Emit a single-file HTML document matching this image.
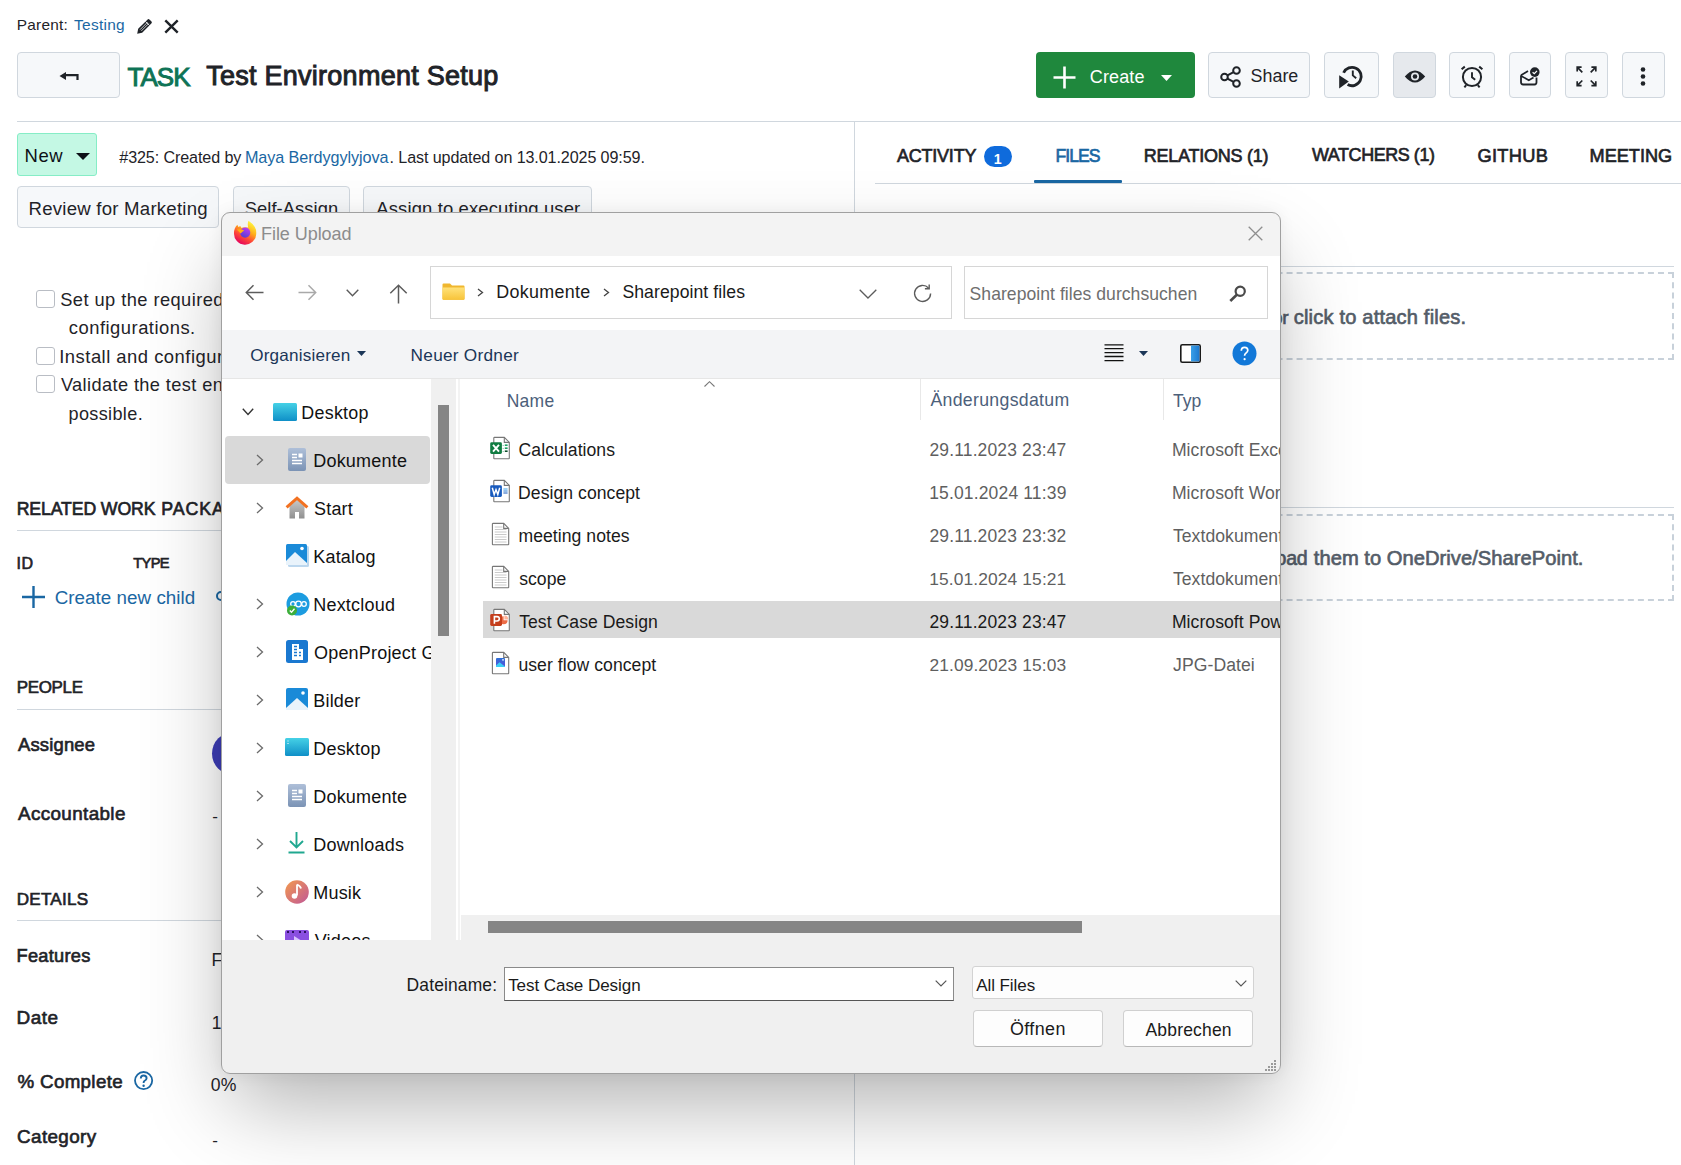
<!DOCTYPE html><html><head><meta charset="utf-8"><style>

html,body{margin:0;padding:0;width:1681px;height:1165px;overflow:hidden;background:#fff;position:relative;font-family:'Liberation Sans',sans-serif;}
.t{position:absolute;white-space:pre;line-height:1;}
.a{position:absolute;box-sizing:border-box;}
svg{position:absolute;overflow:visible;}

</style></head><body>

<span class="t" style="left:16.77px;top:17.24px;font-size:15.42px;letter-spacing:0.244px;font-weight:400;color:#1f2328;">Parent:</span>
<span class="t" style="left:74.09px;top:17.21px;font-size:15.46px;letter-spacing:0.266px;font-weight:400;color:#1a67a3;">Testing</span>
<svg style="left:136px;top:18px" width="17" height="17" viewBox="0 0 17 17"><g transform="translate(1.2,15.8) rotate(-45)"><path d="M0 0 L4.2 -2.8 H17.2 Q18.8 -2.8 18.8 -1.2 V1.2 Q18.8 2.8 17.2 2.8 H4.2 Z" fill="#1f2328"/><path d="M5 -0.9 H15.5 M5 0.9 H15.5" stroke="#fff" stroke-width="0.7"/><path d="M14.6 -2.8 V2.8" stroke="#fff" stroke-width="0.8"/></g></svg>
<svg style="left:163.8px;top:18.8px" width="15" height="15" viewBox="0 0 15 15"><path d="M1.3 1.3 L13.7 13.7 M13.7 1.3 L1.3 13.7" stroke="#1f2328" stroke-width="2.4"/></svg>
<div class="a" style="left:17px;top:52px;width:103px;height:46px;background:#f6f8fa;border:1px solid #d0d7de;border-radius:4px"></div>
<svg style="left:59px;top:71px" width="20" height="10" viewBox="0 0 20 10"><path d="M0.5 5 L7 1 L7 9 Z" fill="#1f2328"/><path d="M6 4.2 H18.5 V9" stroke="#1f2328" stroke-width="2.2" fill="none"/></svg>
<span class="t" style="left:127.48px;top:64.31px;font-size:25.98px;letter-spacing:-0.939px;font-weight:400;color:#0e7356;-webkit-text-stroke:0.95px currentColor">TASK</span>
<span class="t" style="left:206.26px;top:63.42px;font-size:27.03px;letter-spacing:0.249px;font-weight:400;color:#1f2328;-webkit-text-stroke:0.95px currentColor">Test Environment Setup</span>
<div class="a" style="left:1036px;top:52px;width:159px;height:46px;background:#1f883d;border-radius:4px"></div>
<svg style="left:1053px;top:66px" width="23" height="23" viewBox="0 0 23 23"><path d="M11.5 0.5 V22.5 M0.5 11.5 H22.5" stroke="#fff" stroke-width="2.6"/></svg>
<span class="t" style="left:1089.80px;top:68.11px;font-size:18.06px;letter-spacing:0.108px;font-weight:400;color:#ffffff;">Create</span>
<svg style="left:1161px;top:74.5px" width="11" height="6" viewBox="0 0 11 6"><path d="M0 0 H11 L5.5 6 Z" fill="#fff"/></svg>
<div class="a" style="left:1208px;top:52px;width:102px;height:46px;background:#f6f8fa;border:1px solid #d0d7de;border-radius:4px"></div>
<svg style="left:1220px;top:66px" width="21" height="22" viewBox="0 0 21 22"><circle cx="16.5" cy="4.5" r="3.3" fill="none" stroke="#1f2328" stroke-width="2"/><circle cx="4.5" cy="11" r="3.3" fill="none" stroke="#1f2328" stroke-width="2"/><circle cx="16.5" cy="17.5" r="3.3" fill="none" stroke="#1f2328" stroke-width="2"/><path d="M7.4 9.4 L13.6 6.1 M7.4 12.6 L13.6 15.9" stroke="#1f2328" stroke-width="2"/></svg>
<span class="t" style="left:1250.58px;top:68.26px;font-size:17.89px;letter-spacing:0.007px;font-weight:400;color:#1f2328;">Share</span>
<div class="a" style="left:1324px;top:52px;width:55px;height:46px;background:#f6f8fa;border:1px solid #d0d7de;border-radius:4px"></div>
<div class="a" style="left:1393px;top:52px;width:43px;height:46px;background:#e6e9ed;border:1px solid #d0d7de;border-radius:4px"></div>
<div class="a" style="left:1449px;top:52px;width:46px;height:46px;background:#f6f8fa;border:1px solid #d0d7de;border-radius:4px"></div>
<div class="a" style="left:1509px;top:52px;width:42px;height:46px;background:#f6f8fa;border:1px solid #d0d7de;border-radius:4px"></div>
<div class="a" style="left:1565px;top:52px;width:43px;height:46px;background:#f6f8fa;border:1px solid #d0d7de;border-radius:4px"></div>
<div class="a" style="left:1622px;top:52px;width:43px;height:46px;background:#f6f8fa;border:1px solid #d0d7de;border-radius:4px"></div>
<svg style="left:1337px;top:63px" width="28" height="26" viewBox="0 0 28 26"><path d="M6.6 9.8 A9.2 9.2 0 1 1 10.6 21.6" fill="none" stroke="#1f2328" stroke-width="2.8"/><path d="M15.8 7.6 V12.4 L19.2 15.2" fill="none" stroke="#1f2328" stroke-width="1.9"/><path d="M2.2 12.3 L11.8 18.6 L2.2 25.4 Z" fill="#1f2328"/></svg>
<svg style="left:1403.5px;top:68.5px" width="22" height="15" viewBox="0 0 22 15"><path d="M0.8 7.5 Q11 -4.5 21.2 7.5 Q11 19.5 0.8 7.5 Z" fill="#1f2328"/><circle cx="11" cy="7.5" r="4" fill="#e6e9ed"/><circle cx="11" cy="7.5" r="2.3" fill="#1f2328"/></svg>
<svg style="left:1459.8px;top:64.8px" width="24" height="24" viewBox="0 0 24 24"><circle cx="12" cy="12" r="9.1" fill="none" stroke="#1f2328" stroke-width="2"/><path d="M12 7.2 V12.3 L15.2 14.8" fill="none" stroke="#1f2328" stroke-width="1.9"/><path d="M1.6 4.2 L4.8 1.6 M22.4 4.2 L19.2 1.6 M6.2 20.2 L4.4 22.4 M17.8 20.2 L19.6 22.4" stroke="#1f2328" stroke-width="2"/></svg>
<svg style="left:1518px;top:65px" width="22" height="22" viewBox="0 0 22 22"><path d="M3 10.3 L10 6 M3 10.3 V17.3 Q3 19.5 5.2 19.5 H16.5 Q18.5 19.5 18.5 17.3 V12.5" fill="none" stroke="#1f2328" stroke-width="1.8"/><path d="M3.2 11 L10.8 15.2 L15.5 12.6" fill="none" stroke="#1f2328" stroke-width="1.7"/><circle cx="16.8" cy="7.1" r="4.8" fill="#1f2328"/><path d="M14.6 7.2 L16.3 8.7 L19 5.8" fill="none" stroke="#fff" stroke-width="1.2"/></svg>
<svg style="left:1576px;top:66px" width="21" height="21" viewBox="0 0 21 21"><g fill="none" stroke="#1f2328" stroke-width="1.7"><path d="M1.2 5.6 V1.2 H5.6 M1.2 1.2 L6.3 6.3"/><path d="M15.4 1.2 H19.8 V5.6 M19.8 1.2 L14.7 6.3"/><path d="M1.2 15.2 V19.6 H5.6 M1.2 19.6 L6.3 14.5"/><path d="M19.8 15.2 V19.6 H15.4 M19.8 19.6 L14.7 14.5"/></g></svg>
<svg style="left:1639px;top:67px" width="8" height="19" viewBox="0 0 8 19"><circle cx="4" cy="2.5" r="2.3" fill="#1f2328"/><circle cx="4" cy="9.5" r="2.3" fill="#1f2328"/><circle cx="4" cy="16.5" r="2.3" fill="#1f2328"/></svg>
<div class="a" style="left:17px;top:121px;width:1664px;height:1px;background:#d0d7de"></div>
<div class="a" style="left:854px;top:122px;width:1px;height:1043px;background:#d0d7de"></div>
<div class="a" style="left:17px;top:133px;width:80px;height:43px;background:#c4f8e4;border:1px solid #86edc6;border-radius:3px"></div>
<span class="t" style="left:24.52px;top:147.18px;font-size:18.45px;letter-spacing:0.557px;font-weight:400;color:#0d1117;">New</span>
<svg style="left:75.5px;top:153px" width="14" height="7" viewBox="0 0 14 7"><path d="M0 0 H14 L7 7 Z" fill="#0d1117"/></svg>
<span class="t" style="left:119.30px;top:149.14px;font-size:16.13px;letter-spacing:-0.105px;font-weight:400;color:#1f2328;">#325: Created by</span>
<span class="t" style="left:244.90px;top:149.08px;font-size:16.21px;letter-spacing:-0.070px;font-weight:400;color:#1a67a3;">Maya Berdygylyjova</span>
<span class="t" style="left:389.55px;top:149.16px;font-size:16.12px;letter-spacing:-0.104px;font-weight:400;color:#1f2328;">. Last updated on 13.01.2025 09:59.</span>
<div class="a" style="left:17px;top:186px;width:202px;height:42px;background:#f6f8fa;border:1px solid #d0d7de;border-radius:4px"></div>
<div class="a" style="left:233px;top:186px;width:117px;height:42px;background:#f6f8fa;border:1px solid #d0d7de;border-radius:4px"></div>
<div class="a" style="left:363px;top:186px;width:229px;height:42px;background:#f6f8fa;border:1px solid #d0d7de;border-radius:4px"></div>
<span class="t" style="left:28.51px;top:200.04px;font-size:18.62px;letter-spacing:0.228px;font-weight:400;color:#1f2328;">Review for Marketing</span>
<span class="t" style="left:244.67px;top:200.28px;font-size:18.34px;letter-spacing:0.091px;font-weight:400;color:#1f2328;">Self-Assign</span>
<span class="t" style="left:376.30px;top:200.19px;font-size:18.44px;letter-spacing:0.133px;font-weight:400;color:#1f2328;">Assign to executing user</span>
<div class="a" style="left:36px;top:290px;width:19px;height:18px;border:1.5px solid #b9bdc4;border-radius:3px;background:#fff"></div>
<div class="a" style="left:36px;top:347px;width:19px;height:18px;border:1.5px solid #b9bdc4;border-radius:3px;background:#fff"></div>
<div class="a" style="left:36px;top:375px;width:19px;height:18px;border:1.5px solid #b9bdc4;border-radius:3px;background:#fff"></div>
<span class="t" style="left:60.17px;top:290.94px;font-size:18.27px;letter-spacing:0.443px;font-weight:400;color:#1f2328;">Set up the required</span>
<span class="t" style="left:68.86px;top:318.93px;font-size:18.39px;letter-spacing:0.488px;font-weight:400;color:#1f2328;">configurations.</span>
<span class="t" style="left:59.24px;top:347.69px;font-size:18.43px;letter-spacing:0.487px;font-weight:400;color:#1f2328;">Install and configur</span>
<span class="t" style="left:60.90px;top:375.98px;font-size:18.21px;letter-spacing:0.397px;font-weight:400;color:#1f2328;">Validate the test en</span>
<span class="t" style="left:68.52px;top:404.90px;font-size:18.07px;letter-spacing:0.357px;font-weight:400;color:#1f2328;">possible.</span>
<span class="t" style="left:16.68px;top:500.62px;font-size:17.70px;letter-spacing:-0.125px;font-weight:400;color:#1f2328;-webkit-text-stroke:0.65px currentColor">RELATED WORK</span>
<span class="t" style="left:161.28px;top:500.53px;font-size:17.80px;letter-spacing:0.900px;font-weight:400;color:#1f2328;-webkit-text-stroke:0.65px currentColor">PACKAGES</span>
<div class="a" style="left:17px;top:530px;width:838px;height:1px;background:#d0d7de"></div>
<span class="t" style="left:16.56px;top:555.23px;font-size:16.04px;letter-spacing:0.584px;font-weight:400;color:#1f2328;-webkit-text-stroke:0.65px currentColor">ID</span>
<span class="t" style="left:133.21px;top:556.42px;font-size:14.63px;letter-spacing:-0.625px;font-weight:400;color:#1f2328;-webkit-text-stroke:0.65px currentColor">TYPE</span>
<svg style="left:22px;top:586px" width="23" height="22" viewBox="0 0 23 22"><path d="M11.5 0 V22 M0 11 H23" stroke="#1a67a3" stroke-width="2.4"/></svg>
<span class="t" style="left:54.66px;top:589.28px;font-size:18.80px;letter-spacing:0.043px;font-weight:400;color:#1a67a3;">Create new child</span>
<svg style="left:214px;top:590px" width="12" height="12" viewBox="0 0 12 12"><circle cx="7" cy="6" r="4" fill="none" stroke="#1a67a3" stroke-width="2"/></svg>
<span class="t" style="left:16.64px;top:680.05px;font-size:16.95px;letter-spacing:-0.288px;font-weight:400;color:#1f2328;-webkit-text-stroke:0.65px currentColor">PEOPLE</span>
<div class="a" style="left:17px;top:709px;width:838px;height:1px;background:#d0d7de"></div>
<span class="t" style="left:18.00px;top:736.29px;font-size:18.45px;letter-spacing:0.169px;font-weight:400;color:#1f2328;-webkit-text-stroke:0.65px currentColor">Assignee</span>
<div class="a" style="left:212.2px;top:732px;width:43px;height:43px;background:#3d3db8;border-radius:50%"></div>
<span class="t" style="left:18.00px;top:804.65px;font-size:18.84px;letter-spacing:0.376px;font-weight:400;color:#1f2328;-webkit-text-stroke:0.65px currentColor">Accountable</span>
<span class="t" style="left:212.32px;top:807.71px;font-size:17.00px;letter-spacing:0.000px;font-weight:400;color:#1f2328;">-</span>
<span class="t" style="left:16.63px;top:890.50px;font-size:17.13px;letter-spacing:0.246px;font-weight:400;color:#1f2328;-webkit-text-stroke:0.65px currentColor">DETAILS</span>
<div class="a" style="left:17px;top:920px;width:838px;height:1px;background:#d0d7de"></div>
<span class="t" style="left:16.54px;top:947.07px;font-size:18.23px;letter-spacing:0.268px;font-weight:400;color:#1f2328;-webkit-text-stroke:0.65px currentColor">Features</span>
<span class="t" style="left:211.60px;top:951.69px;font-size:17.50px;letter-spacing:0.000px;font-weight:400;color:#1f2328;">F</span>
<span class="t" style="left:16.48px;top:1009.34px;font-size:18.97px;letter-spacing:0.543px;font-weight:400;color:#1f2328;-webkit-text-stroke:0.65px currentColor">Date</span>
<span class="t" style="left:211.78px;top:1014.69px;font-size:17.50px;letter-spacing:0.000px;font-weight:400;color:#1f2328;">1</span>
<span class="t" style="left:17.44px;top:1072.53px;font-size:18.74px;letter-spacing:0.350px;font-weight:400;color:#1f2328;-webkit-text-stroke:0.65px currentColor">% Complete</span>
<svg style="left:133.5px;top:1071px" width="20" height="20" viewBox="0 0 20 20"><circle cx="9.6" cy="9.6" r="8.6" fill="none" stroke="#1a67a3" stroke-width="1.8"/><path d="M6.8 7.5 Q6.8 4.5 9.6 4.5 Q12.6 4.5 12.6 7.2 Q12.6 9 10.4 10 Q9.6 10.5 9.6 12" fill="none" stroke="#1a67a3" stroke-width="1.9"/><circle cx="9.6" cy="14.8" r="1.2" fill="#1a67a3"/></svg>
<span class="t" style="left:210.87px;top:1077.10px;font-size:17.60px;letter-spacing:0.200px;font-weight:400;color:#1f2328;">0%</span>
<span class="t" style="left:17.06px;top:1128.06px;font-size:18.83px;letter-spacing:0.388px;font-weight:400;color:#1f2328;-webkit-text-stroke:0.65px currentColor">Category</span>
<span class="t" style="left:212.32px;top:1131.71px;font-size:17.00px;letter-spacing:0.000px;font-weight:400;color:#1f2328;">-</span>
<span class="t" style="left:897.00px;top:147.23px;font-size:18.03px;letter-spacing:-0.236px;font-weight:400;color:#1f2328;-webkit-text-stroke:0.65px currentColor">ACTIVITY</span>
<div class="a" style="left:984px;top:146px;width:28px;height:21px;background:#0f6bdc;border-radius:11px"></div>
<span class="t" style="left:993.65px;top:151.78px;font-size:14.20px;letter-spacing:0.000px;font-weight:700;color:#fff;">1</span>
<span class="t" style="left:1055.39px;top:147.54px;font-size:17.67px;letter-spacing:-0.962px;font-weight:400;color:#1a67a3;-webkit-text-stroke:0.65px currentColor">FILES</span>
<span class="t" style="left:1143.86px;top:147.26px;font-size:18.01px;letter-spacing:-0.261px;font-weight:400;color:#1f2328;-webkit-text-stroke:0.65px currentColor">RELATIONS (1)</span>
<span class="t" style="left:1312.00px;top:147.31px;font-size:17.94px;letter-spacing:-0.419px;font-weight:400;color:#1f2328;-webkit-text-stroke:0.65px currentColor">WATCHERS (1)</span>
<span class="t" style="left:1477.59px;top:147.03px;font-size:18.27px;letter-spacing:0.250px;font-weight:400;color:#1f2328;-webkit-text-stroke:0.65px currentColor">GITHUB</span>
<span class="t" style="left:1589.55px;top:147.13px;font-size:18.15px;letter-spacing:-0.004px;font-weight:400;color:#1f2328;-webkit-text-stroke:0.65px currentColor">MEETING</span>
<div class="a" style="left:875px;top:183px;width:806px;height:1px;background:#d0d7de"></div>
<div class="a" style="left:1034px;top:180px;width:88px;height:3px;background:#1a67a3;border-radius:1px"></div>
<div class="a" style="left:875px;top:266px;width:799px;height:1px;background:#d0d7de"></div>
<div class="a" style="left:875px;top:272px;width:799px;height:88px;border:2px dashed #c8d1da"></div>
<span class="t" style="left:1293.70px;top:306.92px;font-size:20.06px;letter-spacing:0.198px;font-weight:400;color:#545d68;-webkit-text-stroke:0.65px currentColor">click to attach files.</span>
<span class="t" style="left:1145.87px;top:307.75px;font-size:19.08px;letter-spacing:-0.204px;font-weight:400;color:#545d68;-webkit-text-stroke:0.65px currentColor">Drop files here or</span>
<div class="a" style="left:875px;top:507px;width:799px;height:1px;background:#d0d7de"></div>
<div class="a" style="left:875px;top:514px;width:799px;height:87px;border:2px dashed #c8d1da"></div>
<span class="t" style="left:1313.80px;top:548.13px;font-size:20.16px;letter-spacing:0.026px;font-weight:400;color:#545d68;-webkit-text-stroke:0.65px currentColor">them to OneDrive/SharePoint.</span>
<span class="t" style="left:1101.77px;top:548.65px;font-size:19.55px;letter-spacing:-0.291px;font-weight:400;color:#545d68;-webkit-text-stroke:0.65px currentColor">Drop files here to upload</span>

<div class="a" style="left:221px;top:212px;width:1060px;height:862px;border-radius:9px;background:#f0f0f0;box-shadow:0 40px 80px -10px rgba(0,0,0,0.30),0 0 16px rgba(0,0,0,0.06)"></div><div class="a" style="left:221px;top:212px;width:1060px;height:862px;border-radius:9px;overflow:hidden">
<div class="a" style="left:0.00px;top:0.00px;width:1061px;height:44px;background:#f3f3f3"></div>
<svg style="left:9.00px;top:4.00px" width="32" height="32" viewBox="0 0 32 32"><defs><linearGradient id="ffb" x1="0.8" y1="0.1" x2="0.3" y2="1"><stop offset="0" stop-color="#fff03a"/><stop offset="0.35" stop-color="#ffae1a"/><stop offset="0.65" stop-color="#ff4a36"/><stop offset="1" stop-color="#e3005f"/></linearGradient>
      <linearGradient id="ffp" x1="0.7" y1="0" x2="0.2" y2="1"><stop offset="0" stop-color="#c23cf0"/><stop offset="1" stop-color="#4a3fd0"/></linearGradient></defs>
      <path d="M7.3 8.8 L8.4 11 L10.3 10 L11.2 11.8 Q15 10.6 18.2 11.6 Q17.2 8 18.5 4.8 Q22.5 7.5 24.8 11 Q26.6 14 26.2 18.2 A11.1 11.1 0 0 1 4 17 Q4 12 7.3 8.8 Z" fill="url(#ffb)"/>
      <circle cx="15.2" cy="16.6" r="5.1" fill="url(#ffp)"/>
      <path d="M6.8 13.6 Q10.5 12.6 14.2 14.4 Q12 15.6 10.6 17.6 Q8.6 15.2 6.8 13.6 Z" fill="#ffb00f"/></svg>
<span class="t" style="left:40.06px;top:13.14px;font-size:18.03px;letter-spacing:-0.063px;font-weight:400;color:#8c8c8c;">File Upload</span>
<svg style="left:1027.00px;top:14.00px" width="15" height="15" viewBox="0 0 15 15"><path d="M0.7 0.7 L14.3 14.3 M14.3 0.7 L0.7 14.3" stroke="#8e8e8e" stroke-width="1.3"/></svg>
<div class="a" style="left:0.00px;top:44.00px;width:1061px;height:74px;background:#ffffff"></div>
<svg style="left:24.00px;top:72.00px" width="19" height="17" viewBox="0 0 19 17"><path d="M18.5 8.5 H1.5 M8.5 1.3 L1.3 8.5 L8.5 15.7" fill="none" stroke="#5c5c5c" stroke-width="1.5"/></svg>
<svg style="left:77.00px;top:72.00px" width="19" height="17" viewBox="0 0 19 17"><path d="M0.5 8.5 H17.5 M10.5 1.3 L17.7 8.5 L10.5 15.7" fill="none" stroke="#a9a9a9" stroke-width="1.5"/></svg>
<svg style="left:125.00px;top:76.50px" width="13" height="8" viewBox="0 0 13 8"><path d="M0.7 0.7 L6.5 6.7 L12.3 0.7" fill="none" stroke="#5c5c5c" stroke-width="1.4"/></svg>
<svg style="left:168.00px;top:72.00px" width="19" height="20" viewBox="0 0 19 20"><path d="M9.5 19.5 V1.5 M1.3 9.3 L9.5 1.2 L17.7 9.3" fill="none" stroke="#5c5c5c" stroke-width="1.5"/></svg>
<div class="a" style="left:209.00px;top:54.00px;width:522px;height:53px;border:1px solid #d6d6d6;background:#fff"></div>
<svg style="left:221.00px;top:71.00px" width="23" height="17" viewBox="0 0 23 17"><defs><linearGradient id="fold" x1="0" y1="0" x2="0" y2="1"><stop offset="0" stop-color="#ffe27a"/><stop offset="1" stop-color="#f7c339"/></linearGradient></defs>
      <path d="M0.5 1.5 Q0.5 0.5 1.5 0.5 H8 L10 2.5 H21.5 Q22.5 2.5 22.5 3.5 V15.8 Q22.5 16.8 21.5 16.8 H1.5 Q0.5 16.8 0.5 15.8 Z" fill="#f0b72f"/>
      <path d="M0.5 4.5 H22.5 V15.8 Q22.5 16.8 21.5 16.8 H1.5 Q0.5 16.8 0.5 15.8 Z" fill="url(#fold)"/></svg>
<svg style="left:256.00px;top:76.00px" width="7" height="9" viewBox="0 0 7 9"><path d="M1 1 L5.5 4.5 L1 8" fill="none" stroke="#444" stroke-width="1.3"/></svg>
<span class="t" style="left:275.27px;top:72.14px;font-size:17.91px;letter-spacing:0.284px;font-weight:400;color:#1a1a1a;">Dokumente</span>
<svg style="left:382.00px;top:76.00px" width="7" height="9" viewBox="0 0 7 9"><path d="M1 1 L5.5 4.5 L1 8" fill="none" stroke="#444" stroke-width="1.3"/></svg>
<span class="t" style="left:401.39px;top:72.37px;font-size:17.63px;letter-spacing:0.079px;font-weight:400;color:#1a1a1a;">Sharepoint files</span>
<svg style="left:638.00px;top:76.50px" width="18" height="10" viewBox="0 0 18 10"><path d="M0.7 0.7 L9 9 L17.3 0.7" fill="none" stroke="#5c5c5c" stroke-width="1.3"/></svg>
<svg style="left:692.00px;top:71.50px" width="20" height="20" viewBox="0 0 20 20"><path d="M17.6 9.5 A8 8 0 1 1 15.5 4" fill="none" stroke="#5c5c5c" stroke-width="1.4"/><path d="M16.2 0.5 V4.8 H11.9" fill="none" stroke="#5c5c5c" stroke-width="1.4"/></svg>
<div class="a" style="left:743.00px;top:54.00px;width:304px;height:53px;border:1px solid #d6d6d6;background:#fff"></div>
<span class="t" style="left:748.60px;top:73.93px;font-size:17.56px;letter-spacing:0.050px;font-weight:400;color:#6e6e6e;">Sharepoint files durchsuchen</span>
<svg style="left:1008.00px;top:73.00px" width="18" height="17" viewBox="0 0 18 17"><circle cx="11.2" cy="6.3" r="4.6" fill="none" stroke="#4a4a4a" stroke-width="2.2"/><path d="M7.8 9.8 L1.3 16" stroke="#4a4a4a" stroke-width="2.6"/></svg>
<div class="a" style="left:0.00px;top:118.00px;width:1061px;height:49px;background:#f3f4f6;border-bottom:1px solid #e6e6e6"></div>
<span class="t" style="left:29.21px;top:134.80px;font-size:17.13px;letter-spacing:0.189px;font-weight:400;color:#1b3658;">Organisieren</span>
<svg style="left:136.00px;top:139.00px" width="9" height="5" viewBox="0 0 9 5"><path d="M0 0 H9 L4.5 5 Z" fill="#1b3658"/></svg>
<span class="t" style="left:189.62px;top:134.71px;font-size:17.23px;letter-spacing:0.259px;font-weight:400;color:#1b3658;">Neuer Ordner</span>
<svg style="left:883.00px;top:132.00px" width="20" height="18" viewBox="0 0 20 18"><path d="M0.5 0.8 H19.5 M0.5 4.7 H19.5 M0.5 8.6 H19.5 M0.5 12.5 H19.5 M0.5 16.6 H19.5" stroke="#111" stroke-width="1.3"/></svg>
<svg style="left:918.00px;top:138.50px" width="9" height="5" viewBox="0 0 9 5"><path d="M0 0 H9 L4.5 5 Z" fill="#1b3658"/></svg>
<svg style="left:959.00px;top:131.50px" width="21" height="19" viewBox="0 0 21 19"><defs><linearGradient id="pv" x1="0" y1="0" x2="1" y2="0"><stop offset="0" stop-color="#3aa0e8"/><stop offset="1" stop-color="#1d79d0"/></linearGradient></defs><rect x="0.8" y="0.8" width="19.4" height="17.4" rx="1.5" fill="#fff" stroke="#1a1a1a" stroke-width="1.6"/><rect x="11" y="1.6" width="8.4" height="15.8" fill="url(#pv)"/></svg>
<svg style="left:1011.00px;top:129.00px" width="25" height="25" viewBox="0 0 25 25"><circle cx="12.5" cy="12.5" r="12" fill="#1278d8"/><path d="M9.3 9.8 Q9.3 6.3 12.6 6.3 Q15.8 6.3 15.8 9.3 Q15.8 11.2 13.6 12.4 Q12.6 13 12.6 14.8" fill="none" stroke="#fff" stroke-width="1.7"/><circle cx="12.6" cy="18.2" r="1.1" fill="#fff"/></svg>
<div class="a" style="left:210.00px;top:167.00px;width:25px;height:561px;background:#f0f0f0"></div>
<div class="a" style="left:217.00px;top:193.00px;width:11px;height:231px;background:#858585"></div>
<div class="a" style="left:235.00px;top:167.00px;width:5px;height:561px;background:#fff"></div>
<div class="a" style="left:237.00px;top:167.00px;width:1.5px;height:561px;background:#f3f3f3"></div>
<div class="a" style="left:240.00px;top:703.00px;width:821px;height:25px;background:#f0f0f0"></div>
<div class="a" style="left:267.00px;top:709.00px;width:594px;height:12px;background:#858585"></div>
<div class="a" style="left:0.00px;top:728.00px;width:1061px;height:134px;background:#f0f0f0"></div>
<span class="t" style="left:185.61px;top:764.74px;font-size:17.44px;letter-spacing:0.141px;font-weight:400;color:#1a1a1a;">Dateiname:</span>
<div class="a" style="left:283.00px;top:755.00px;width:450px;height:34px;background:#fff;border:1px solid #8a8a8a;border-bottom-color:#555"></div>
<span class="t" style="left:287.16px;top:765.07px;font-size:17.05px;letter-spacing:-0.067px;font-weight:400;color:#1a1a1a;">Test Case Design</span>
<svg style="left:713.50px;top:767.50px" width="12" height="7" viewBox="0 0 12 7"><path d="M0.7 0.7 L6 6 L11.3 0.7" fill="none" stroke="#555" stroke-width="1.2"/></svg>
<div class="a" style="left:751.00px;top:754.00px;width:282px;height:33px;background:#fdfdfd;border:1px solid #d3d3d3;border-radius:3px"></div>
<span class="t" style="left:755.20px;top:765.09px;font-size:17.02px;letter-spacing:-0.070px;font-weight:400;color:#1a1a1a;">All Files</span>
<svg style="left:1013.50px;top:767.50px" width="12" height="7" viewBox="0 0 12 7"><path d="M0.7 0.7 L6 6 L11.3 0.7" fill="none" stroke="#555" stroke-width="1.2"/></svg>
<div class="a" style="left:752.00px;top:797.50px;width:130px;height:37px;background:#fdfdfd;border:1px solid #d0d0d0;border-bottom-color:#b8b8b8;border-radius:4px"></div>
<span class="t" style="left:788.88px;top:809.23px;font-size:17.92px;letter-spacing:0.429px;font-weight:400;color:#1a1a1a;">Öffnen</span>
<div class="a" style="left:902.00px;top:797.50px;width:130px;height:37px;background:#fdfdfd;border:1px solid #d0d0d0;border-bottom-color:#b8b8b8;border-radius:4px"></div>
<span class="t" style="left:924.50px;top:809.60px;font-size:17.49px;letter-spacing:0.186px;font-weight:400;color:#1a1a1a;">Abbrechen</span>
<svg style="left:1044.00px;top:847.00px" width="12" height="12" viewBox="0 0 12 12"><g fill="#9a9a9a"><rect x="9" y="1" width="2" height="2"/><rect x="6" y="4" width="2" height="2"/><rect x="9" y="4" width="2" height="2"/><rect x="3" y="7" width="2" height="2"/><rect x="6" y="7" width="2" height="2"/><rect x="9" y="7" width="2" height="2"/><rect x="0" y="10" width="2" height="2"/><rect x="3" y="10" width="2" height="2"/><rect x="6" y="10" width="2" height="2"/><rect x="9" y="10" width="2" height="2"/></g></svg>

<div class="a" style="left:1px;top:167px;width:209px;height:561px;overflow:hidden;background:#fff">
<svg style="left:20.00px;top:28.50px" width="12" height="8" viewBox="0 0 12 8"><path d="M0.8 0.8 L6 6.5 L11.2 0.8" fill="none" stroke="#333" stroke-width="1.4"/></svg>
<svg style="left:51.00px;top:24.00px" width="24" height="18" viewBox="0 0 24 18"><defs><linearGradient id="dsk" x1="0" y1="0" x2="0" y2="1"><stop offset="0" stop-color="#45d1e6"/><stop offset="1" stop-color="#0f8fc7"/></linearGradient></defs><rect x="0" y="0" width="24" height="18" rx="1.5" fill="url(#dsk)"/></svg>
<span class="t" style="left:79.37px;top:25.95px;font-size:17.89px;letter-spacing:0.257px;font-weight:400;color:#111;">Desktop</span>
<div class="a" style="left:3.00px;top:57.00px;width:205px;height:48px;background:#d9d9d9;border-radius:4px"></div>
<svg style="left:34.00px;top:75.00px" width="8" height="12" viewBox="0 0 8 12"><path d="M1 1 L6.5 6 L1 11" fill="none" stroke="#6b6b6b" stroke-width="1.3"/></svg>
<span class="t" style="left:91.26px;top:72.86px;font-size:18.00px;letter-spacing:0.200px;font-weight:400;color:#111;">Dokumente</span>
<svg style="left:66.00px;top:69.00px" width="19" height="24" viewBox="0 0 19 24"><defs><linearGradient id="doc0" x1="0" y1="0" x2="0" y2="1"><stop offset="0" stop-color="#aebfd8"/><stop offset="1" stop-color="#7b93b5"/></linearGradient></defs><rect x="0" y="0" width="18" height="23" rx="2" fill="url(#doc0)"/><path d="M4 6.5 H9 M4 9.5 H9 M4 12.5 H14 M4 15.5 H14" stroke="#fff" stroke-width="1.4"/><rect x="10.5" y="5.5" width="4" height="4" fill="#fff"/></svg>
<svg style="left:34.00px;top:123.00px" width="8" height="12" viewBox="0 0 8 12"><path d="M1 1 L6.5 6 L1 11" fill="none" stroke="#6b6b6b" stroke-width="1.3"/></svg>
<span class="t" style="left:91.98px;top:120.86px;font-size:18.00px;letter-spacing:0.200px;font-weight:400;color:#111;">Start</span>
<svg style="left:63.00px;top:116.00px" width="24" height="24" viewBox="0 0 24 24"><defs><linearGradient id="hs" x1="0" y1="0" x2="0" y2="1"><stop offset="0" stop-color="#c9c9c9"/><stop offset="1" stop-color="#8f8f8f"/></linearGradient></defs><path d="M4.5 11 V23.6 H10 V17 H14 V23.6 H19.5 V11 L12 4.5 Z" fill="url(#hs)"/><path d="M1.6 12.4 L12 3.2 L22.4 12.4" fill="none" stroke="#f27121" stroke-width="3"/></svg>
<span class="t" style="left:91.26px;top:168.86px;font-size:18.00px;letter-spacing:0.200px;font-weight:400;color:#111;">Katalog</span>
<svg style="left:63.50px;top:165.00px" width="24" height="24" viewBox="0 0 24 24"><rect x="2" y="2" width="21" height="21" rx="1.5" fill="#bcd7ee"/><rect x="0" y="0" width="21" height="21" rx="1.5" fill="#1a8ad8"/><path d="M0 17 L9 8 L21 19 V21 H0 Z" fill="#e9f3fb"/><circle cx="16" cy="4.5" r="1.8" fill="#fff"/></svg>
<svg style="left:34.00px;top:219.00px" width="8" height="12" viewBox="0 0 8 12"><path d="M1 1 L6.5 6 L1 11" fill="none" stroke="#6b6b6b" stroke-width="1.3"/></svg>
<span class="t" style="left:91.26px;top:216.86px;font-size:18.00px;letter-spacing:0.200px;font-weight:400;color:#111;">Nextcloud</span>
<svg style="left:63.50px;top:213.00px" width="24" height="24" viewBox="0 0 24 24"><circle cx="12" cy="12" r="11.5" fill="#1c9ce0"/><circle cx="7" cy="12" r="2.3" fill="none" stroke="#fff" stroke-width="1.3"/><circle cx="12.5" cy="12" r="2.8" fill="none" stroke="#fff" stroke-width="1.3"/><circle cx="18" cy="12" r="2.3" fill="none" stroke="#fff" stroke-width="1.3"/><circle cx="6" cy="18.5" r="5" fill="#3cae3a"/><path d="M3.8 18.5 L5.5 20.2 L8.5 16.8" fill="none" stroke="#fff" stroke-width="1.3"/></svg>
<svg style="left:34.00px;top:267.00px" width="8" height="12" viewBox="0 0 8 12"><path d="M1 1 L6.5 6 L1 11" fill="none" stroke="#6b6b6b" stroke-width="1.3"/></svg>
<span class="t" style="left:91.98px;top:264.86px;font-size:18.00px;letter-spacing:0.200px;font-weight:400;color:#111;">OpenProject GmbH</span>
<svg style="left:64.30px;top:261.00px" width="22" height="22" viewBox="0 0 22 22"><rect x="0" y="0" width="22" height="23" rx="2.5" fill="#1a78d0"/><path d="M6 20 V4 H13 V9 H17 V20 Z" fill="#fff"/><path d="M8 6.5 H11 M8 9.5 H11 M8 12.5 H11 M13 12.5 H15 M8 15.5 H11 M13 15.5 H15" stroke="#1a78d0" stroke-width="1.4"/></svg>
<svg style="left:34.00px;top:315.00px" width="8" height="12" viewBox="0 0 8 12"><path d="M1 1 L6.5 6 L1 11" fill="none" stroke="#6b6b6b" stroke-width="1.3"/></svg>
<span class="t" style="left:91.26px;top:312.86px;font-size:18.00px;letter-spacing:0.200px;font-weight:400;color:#111;">Bilder</span>
<svg style="left:64.30px;top:309.00px" width="22" height="22" viewBox="0 0 22 22"><rect x="0" y="0" width="22" height="22" rx="2" fill="#1a8ad8"/><path d="M0 20 L11 10 L22 20 V22 H0 Z" fill="#e9f3fb"/><circle cx="17" cy="5" r="1.8" fill="#fff"/></svg>
<svg style="left:34.00px;top:363.00px" width="8" height="12" viewBox="0 0 8 12"><path d="M1 1 L6.5 6 L1 11" fill="none" stroke="#6b6b6b" stroke-width="1.3"/></svg>
<span class="t" style="left:91.26px;top:360.86px;font-size:18.00px;letter-spacing:0.200px;font-weight:400;color:#111;">Desktop</span>
<svg style="left:63.00px;top:359.00px" width="24" height="18" viewBox="0 0 24 18"><defs><linearGradient id="dsk2" x1="0" y1="0" x2="0" y2="1"><stop offset="0" stop-color="#45d1e6"/><stop offset="1" stop-color="#0f8fc7"/></linearGradient></defs><rect x="0" y="0" width="24" height="18" rx="1.5" fill="url(#dsk2)"/><path d="M3 2.5 V3.5 M3 5 V6" stroke="#fff" stroke-width="1"/></svg>
<svg style="left:34.00px;top:411.00px" width="8" height="12" viewBox="0 0 8 12"><path d="M1 1 L6.5 6 L1 11" fill="none" stroke="#6b6b6b" stroke-width="1.3"/></svg>
<span class="t" style="left:91.26px;top:408.86px;font-size:18.00px;letter-spacing:0.200px;font-weight:400;color:#111;">Dokumente</span>
<svg style="left:66.00px;top:405.00px" width="19" height="24" viewBox="0 0 19 24"><defs><linearGradient id="doc7" x1="0" y1="0" x2="0" y2="1"><stop offset="0" stop-color="#aebfd8"/><stop offset="1" stop-color="#7b93b5"/></linearGradient></defs><rect x="0" y="0" width="18" height="23" rx="2" fill="url(#doc7)"/><path d="M4 6.5 H9 M4 9.5 H9 M4 12.5 H14 M4 15.5 H14" stroke="#fff" stroke-width="1.4"/><rect x="10.5" y="5.5" width="4" height="4" fill="#fff"/></svg>
<svg style="left:34.00px;top:459.00px" width="8" height="12" viewBox="0 0 8 12"><path d="M1 1 L6.5 6 L1 11" fill="none" stroke="#6b6b6b" stroke-width="1.3"/></svg>
<span class="t" style="left:91.26px;top:456.86px;font-size:18.00px;letter-spacing:0.200px;font-weight:400;color:#111;">Downloads</span>
<svg style="left:66.00px;top:452.00px" width="17" height="23" viewBox="0 0 17 23"><path d="M8.5 1 V16.5 M2 10 L8.5 16.5 L15 10 M0.5 21.5 H16.5" fill="none" stroke="#20a890" stroke-width="1.9"/></svg>
<svg style="left:34.00px;top:507.00px" width="8" height="12" viewBox="0 0 8 12"><path d="M1 1 L6.5 6 L1 11" fill="none" stroke="#6b6b6b" stroke-width="1.3"/></svg>
<span class="t" style="left:91.26px;top:504.86px;font-size:18.00px;letter-spacing:0.200px;font-weight:400;color:#111;">Musik</span>
<svg style="left:63.00px;top:501.00px" width="24" height="24" viewBox="0 0 24 24"><defs><linearGradient id="mus" x1="0" y1="0" x2="1" y2="1"><stop offset="0" stop-color="#f39a4d"/><stop offset="1" stop-color="#c05898"/></linearGradient></defs><circle cx="12" cy="12" r="11.8" fill="url(#mus)"/><path d="M12 4.5 V15.5 M12 4.5 Q15.5 6 16 8.5" fill="none" stroke="#fff" stroke-width="1.8"/><circle cx="9.5" cy="16" r="2.8" fill="#fff"/></svg>
<svg style="left:34.00px;top:555.00px" width="8" height="12" viewBox="0 0 8 12"><path d="M1 1 L6.5 6 L1 11" fill="none" stroke="#6b6b6b" stroke-width="1.3"/></svg>
<span class="t" style="left:92.70px;top:552.86px;font-size:18.00px;letter-spacing:0.200px;font-weight:400;color:#111;">Videos</span>
<svg style="left:63.00px;top:549.00px" width="24" height="22" viewBox="0 0 24 22"><rect x="0" y="2" width="24" height="20" rx="2" fill="#8a4fe0"/><path d="M2 4 H4 M7 4 H9 M14 4 H16 M19 4 H21" stroke="#2d1060" stroke-width="2"/><path d="M9 8 L17 13 L9 18 Z" fill="#d9c4ff"/></svg>
</div>
<div class="a" style="left:240px;top:167px;width:820px;height:536px;overflow:hidden;background:#fff">
<svg style="left:243.00px;top:1.50px" width="11" height="6" viewBox="0 0 11 6"><path d="M0.5 5.5 L5.5 0.7 L10.5 5.5" fill="none" stroke="#777" stroke-width="1.1"/></svg>
<span class="t" style="left:45.70px;top:13.60px;font-size:17.49px;letter-spacing:0.262px;font-weight:400;color:#4c607a;">Name</span>
<div class="a" style="left:459.00px;top:0.00px;width:1px;height:41px;background:#e8e8e8"></div>
<span class="t" style="left:469.40px;top:13.40px;font-size:17.72px;letter-spacing:0.317px;font-weight:400;color:#4c607a;">Änderungsdatum</span>
<div class="a" style="left:702.00px;top:0.00px;width:1px;height:41px;background:#e8e8e8"></div>
<span class="t" style="left:711.95px;top:13.59px;font-size:17.50px;letter-spacing:0.000px;font-weight:400;color:#4c607a;">Typ</span>
<div class="a" style="left:22.00px;top:222.00px;width:820px;height:37px;background:#d9d9d9"></div>
<span class="t" style="left:57.62px;top:62.50px;font-size:17.60px;letter-spacing:0.050px;font-weight:400;color:#1a1a1a;">Calculations</span>
<span class="t" style="left:468.53px;top:62.61px;font-size:17.47px;letter-spacing:0.146px;font-weight:400;color:#5f5f5f;">29.11.2023 23:47</span>
<span class="t" style="left:710.89px;top:62.50px;font-size:17.60px;letter-spacing:0.050px;font-weight:400;color:#5f5f5f;">Microsoft Excel-Arbeitsblatt</span>
<svg style="left:27.00px;top:56.80px" width="24" height="24" viewBox="0 0 24 24"><path d="M5.8 1.9 Q5.8 1.4 6.3 1.4 H16.3 L21.3 6.4 V22.3 Q21.3 22.8 20.8 22.8 H6.3 Q5.8 22.8 5.8 22.3 Z" fill="#fff" stroke="#777" stroke-width="1.1"/><path d="M16.3 1.4 V6.4 H21.3" fill="none" stroke="#777" stroke-width="1.1"/><rect x="2.2" y="6.3" width="11.7" height="11.7" rx="1.4" fill="#107c41"/><path d="M5 8.8 L11 15.6 M11 8.8 L5 15.6" stroke="#fff" stroke-width="1.9"/><path d="M15.2 8.9 V9.6 M15.2 11.9 V12.6 M15.2 14.9 V15.6" stroke="#1a8f52" stroke-width="1.1"/><path d="M16.8 9.2 H19.6" stroke="#21a366" stroke-width="1.6"/><path d="M16.8 12.2 H19.6" stroke="#1a9a5c" stroke-width="1.6"/><path d="M16.8 15.2 H19.6" stroke="#0b4d2a" stroke-width="1.6"/></svg>
<span class="t" style="left:57.09px;top:105.50px;font-size:17.60px;letter-spacing:0.050px;font-weight:400;color:#1a1a1a;">Design concept</span>
<span class="t" style="left:468.18px;top:105.59px;font-size:17.49px;letter-spacing:0.158px;font-weight:400;color:#5f5f5f;">15.01.2024 11:39</span>
<span class="t" style="left:710.89px;top:105.50px;font-size:17.60px;letter-spacing:0.050px;font-weight:400;color:#5f5f5f;">Microsoft Word-Dokument</span>
<svg style="left:27.00px;top:99.80px" width="24" height="24" viewBox="0 0 24 24"><path d="M5.8 1.9 Q5.8 1.4 6.3 1.4 H16.3 L21.3 6.4 V22.3 Q21.3 22.8 20.8 22.8 H6.3 Q5.8 22.8 5.8 22.3 Z" fill="#fff" stroke="#777" stroke-width="1.1"/><path d="M16.3 1.4 V6.4 H21.3" fill="none" stroke="#777" stroke-width="1.1"/><rect x="2.2" y="6.3" width="11.7" height="11.7" rx="1.4" fill="#185abd"/><path d="M4.3 8.7 L6.2 15.6 L8 10.6 L9.8 15.6 L11.7 8.7" fill="none" stroke="#fff" stroke-width="1.5"/><path d="M15.4 10 H19.6" stroke="#41a5ee" stroke-width="1"/><path d="M15.4 12 H19.6" stroke="#2b7cd3" stroke-width="1"/><path d="M15.4 14 H19.6" stroke="#185abd" stroke-width="1"/></svg>
<span class="t" style="left:57.44px;top:148.50px;font-size:17.60px;letter-spacing:0.050px;font-weight:400;color:#1a1a1a;">meeting notes</span>
<span class="t" style="left:468.53px;top:148.61px;font-size:17.47px;letter-spacing:0.146px;font-weight:400;color:#5f5f5f;">29.11.2023 23:32</span>
<span class="t" style="left:711.95px;top:148.50px;font-size:17.60px;letter-spacing:0.050px;font-weight:400;color:#5f5f5f;">Textdokument</span>
<svg style="left:27.00px;top:142.80px" width="24" height="24" viewBox="0 0 24 24"><path d="M4.4 1.9 Q4.4 1.4 4.9 1.4 H15.7 L20.7 6.4 V22.3 Q20.7 22.8 20.2 22.8 H4.9 Q4.4 22.8 4.4 22.3 Z" fill="#fff" stroke="#777" stroke-width="1.1"/><path d="M15.7 1.4 V6.4 H20.7" fill="none" stroke="#777" stroke-width="1.1"/><path d="M6.8 5 H14.5 M6.8 7.5 H18.5 M6.8 10 H18.5 M6.8 12.5 H18.5 M6.8 15 H18.5 M6.8 17.5 H18.5 M6.8 20 H18.5" stroke="#c4c4c4" stroke-width="0.9"/></svg>
<span class="t" style="left:58.15px;top:191.50px;font-size:17.60px;letter-spacing:0.050px;font-weight:400;color:#1a1a1a;">scope</span>
<span class="t" style="left:468.18px;top:191.67px;font-size:17.40px;letter-spacing:0.115px;font-weight:400;color:#5f5f5f;">15.01.2024 15:21</span>
<span class="t" style="left:711.95px;top:191.50px;font-size:17.60px;letter-spacing:0.050px;font-weight:400;color:#5f5f5f;">Textdokument</span>
<svg style="left:27.00px;top:185.80px" width="24" height="24" viewBox="0 0 24 24"><path d="M4.4 1.9 Q4.4 1.4 4.9 1.4 H15.7 L20.7 6.4 V22.3 Q20.7 22.8 20.2 22.8 H4.9 Q4.4 22.8 4.4 22.3 Z" fill="#fff" stroke="#777" stroke-width="1.1"/><path d="M15.7 1.4 V6.4 H20.7" fill="none" stroke="#777" stroke-width="1.1"/><path d="M6.8 5 H14.5 M6.8 7.5 H18.5 M6.8 10 H18.5 M6.8 12.5 H18.5 M6.8 15 H18.5 M6.8 17.5 H18.5 M6.8 20 H18.5" stroke="#c4c4c4" stroke-width="0.9"/></svg>
<span class="t" style="left:58.15px;top:234.50px;font-size:17.60px;letter-spacing:0.050px;font-weight:400;color:#1a1a1a;">Test Case Design</span>
<span class="t" style="left:468.53px;top:234.61px;font-size:17.47px;letter-spacing:0.146px;font-weight:400;color:#1a1a1a;">29.11.2023 23:47</span>
<span class="t" style="left:710.89px;top:234.50px;font-size:17.60px;letter-spacing:0.050px;font-weight:400;color:#1a1a1a;">Microsoft PowerPoint-Präsentation</span>
<svg style="left:27.00px;top:228.80px" width="24" height="24" viewBox="0 0 24 24"><path d="M5.8 1.9 Q5.8 1.4 6.3 1.4 H16.3 L21.3 6.4 V22.3 Q21.3 22.8 20.8 22.8 H6.3 Q5.8 22.8 5.8 22.3 Z" fill="#fff" stroke="#777" stroke-width="1.1"/><path d="M16.3 1.4 V6.4 H21.3" fill="none" stroke="#777" stroke-width="1.1"/><path d="M15.6 8.3 A4 4 0 1 0 19.6 12.3 H15.6 Z" fill="#ed6c47"/><path d="M16.4 7.6 A4 4 0 0 1 20.3 11.5 H16.4 Z" fill="#ffb49a"/><rect x="2.2" y="6.1" width="11.8" height="11.8" rx="1.4" fill="#c43e1c"/><path d="M6.4 15.8 V8.6 H9 Q11.3 8.6 11.3 10.8 Q11.3 13 9 13 H6.4" fill="none" stroke="#fff" stroke-width="1.6"/></svg>
<span class="t" style="left:57.44px;top:277.50px;font-size:17.60px;letter-spacing:0.050px;font-weight:400;color:#1a1a1a;">user flow concept</span>
<span class="t" style="left:468.53px;top:277.70px;font-size:17.37px;letter-spacing:0.098px;font-weight:400;color:#5f5f5f;">21.09.2023 15:03</span>
<span class="t" style="left:712.12px;top:277.50px;font-size:17.60px;letter-spacing:0.050px;font-weight:400;color:#5f5f5f;">JPG-Datei</span>
<svg style="left:27.00px;top:271.80px" width="24" height="24" viewBox="0 0 24 24"><path d="M4.4 1.9 Q4.4 1.4 4.9 1.4 H15.7 L20.7 6.4 V22.3 Q20.7 22.8 20.2 22.8 H4.9 Q4.4 22.8 4.4 22.3 Z" fill="#fff" stroke="#777" stroke-width="1.1"/><path d="M15.7 1.4 V6.4 H20.7" fill="none" stroke="#777" stroke-width="1.1"/><defs><linearGradient id="jg" x1="0" y1="0" x2="0" y2="1"><stop offset="0" stop-color="#2d6fd6"/><stop offset="1" stop-color="#5b4fd9"/></linearGradient></defs><rect x="8" y="7" width="9" height="9" rx="1" fill="url(#jg)"/><path d="M8 14.5 L11.5 11.2 L17 15.5 V16 H8 Z" fill="#3ccff5"/><circle cx="15" cy="8.9" r="0.8" fill="#fff"/></svg>
</div>

</div><div class="a" style="left:221px;top:212px;width:1060px;height:862px;border:1.6px solid #a0a0a0;border-radius:9px"></div>
</body></html>
